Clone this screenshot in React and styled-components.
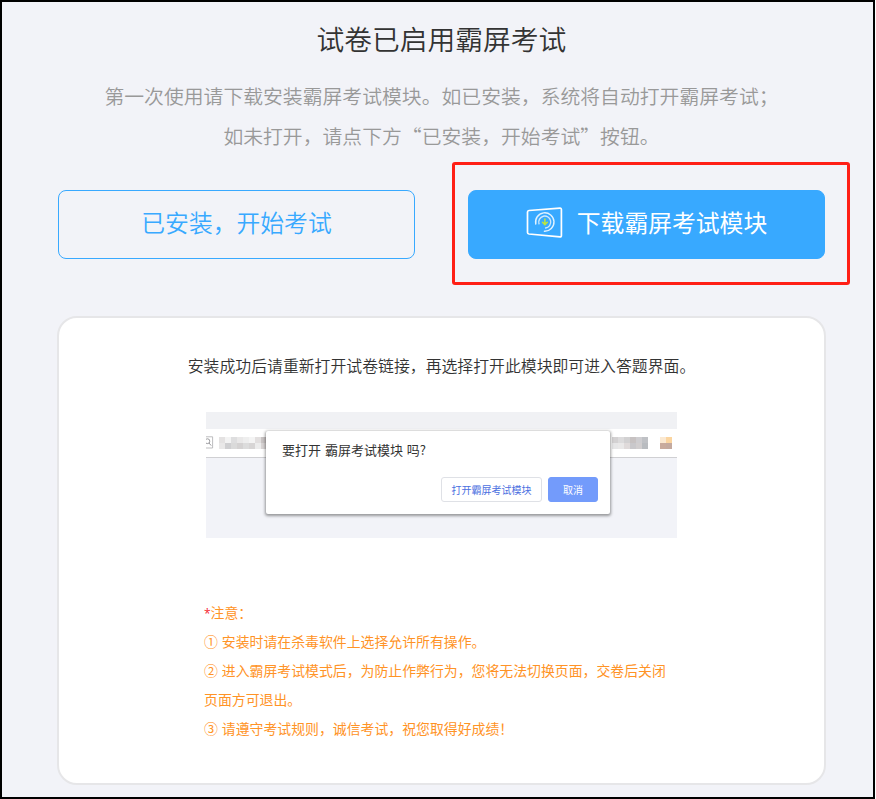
import styled, { createGlobalStyle } from "styled-components";

const EstiloGlobal = createGlobalStyle`
    * {
        box-sizing: border-box;
    }
    html {
        background-color: #fff;
    }
    body {
        margin: 0;
        font-family: "Noto Sans CJK SC", sans-serif;
        overflow: hidden;
    }
    h1, p {
        margin: 0;
        font-weight: inherit;
    }
`

const Pagina = styled.main`
    width: 875px;
    height: 799px;
    padding: 15px 48px 0 56px;
    border: 2px solid #000;
    background-color: #f2f3f8;
    display: flex;
    flex-direction: column;
`

const Titulo = styled.h1`
    text-align: center;
    font-size: 27.76px;
    font-weight: 350;
    line-height: 42px;
    color: #333;
    white-space: nowrap;
`

const Descricao = styled.div`
    margin-top: 17px;
    text-align: center;
    font-size: 19.83px;
    font-weight: 350;
    line-height: 39.5px;
    color: #999;
    white-space: nowrap;
`

const Acoes = styled.div`
    margin-top: 35px;
    display: flex;
    justify-content: space-between;
    width: 767px;
`

const Botao = styled.button`
    position: relative;
    width: 357px;
    height: 69px;
    padding: 0 0 5px;
    border: 1px solid #38a9ff;
    border-radius: 8px;
    background-color: ${({ $primario }) => ($primario ? "#38a9ff" : "transparent")};
    color: ${({ $primario }) => ($primario ? "#fff" : "#38a9ff")};
    font-family: inherit;
    font-size: 23.8px;
    font-weight: ${({ $primario }) => ($primario ? 400 : 350)};
    line-height: 36px;
    display: flex;
    align-items: center;
    justify-content: center;
    gap: 14px;
    white-space: nowrap;

    svg {
        margin-top: 2px;
    }
`

const Destaque = styled.span`
    position: absolute;
    top: -29px;
    left: -17px;
    width: 398px;
    height: 123px;
    border: 3px solid #ff1f16;
    border-radius: 3px;
    pointer-events: none;
`

const Cartao = styled.section`
    margin: 57px 0 0 -1px;
    width: 769px;
    height: 469px;
    border: 2px solid #e6e6e8;
    border-radius: 20px;
    background-color: #fff;
    padding-top: 36px;
    display: flex;
    flex-direction: column;
    align-items: center;
`

const Instrucao = styled.p`
    font-size: 15.87px;
    font-weight: 350;
    line-height: 24px;
    color: #333;
    white-space: nowrap;
`

const Previa = styled.div`
    position: relative;
    margin-top: 34px;
    width: 471px;
    height: 126px;
    background-color: #f2f3f8;
    display: flex;
    flex-direction: column;
`

const BarraAbas = styled.div`
    height: 17px;
    background-color: #f0f1f4;
`

const BarraEndereco = styled.div`
    height: 29px;
    background-color: #fff;
    border-bottom: 1px solid #d0d0d3;
    display: flex;
    align-items: center;
    padding-bottom: 1px;
`

const Mosaico = styled.div`
    display: grid;
    grid-template-columns: repeat(${({ $colunas }) => $colunas}, 6px);
    grid-auto-rows: 6px;
    margin-left: ${({ $recuo }) => $recuo}px;
    filter: blur(0.5px);
`

const Bloco = styled.i`
    background-color: ${({ $cor }) => $cor};
`

const Dialogo = styled.div`
    position: absolute;
    top: 19px;
    left: 60px;
    width: 344px;
    height: 83px;
    padding: 9px 12px 12px 16px;
    background-color: #fff;
    border-radius: 2px;
    box-shadow: 0 1px 3px 1px rgba(0, 0, 0, 0.38);
    display: flex;
    flex-direction: column;
    justify-content: space-between;
`

const DialogoTitulo = styled.p`
    font-size: 13px;
    line-height: 20px;
    color: #333;
    word-spacing: 1px;
    white-space: nowrap;
`

const DialogoAcoes = styled.div`
    display: flex;
    justify-content: flex-end;
    gap: 6px;
`

const DialogoBotao = styled.span`
    width: ${({ $largura }) => $largura}px;
    height: 25px;
    border: 1px solid ${({ $primario }) => ($primario ? "#739bfb" : "#dfe1e6")};
    border-radius: 3px;
    background-color: ${({ $primario }) => ($primario ? "#739bfb" : "#fff")};
    color: ${({ $primario }) => ($primario ? "#fff" : "#4b70df")};
    font-size: 10px;
    line-height: 23px;
    text-align: center;
    white-space: nowrap;
`

const Avisos = styled.div`
    margin-top: 60px;
    width: 475px;
    font-size: 13.88px;
    line-height: 29px;
    color: #ff9326;
    word-spacing: 0.8px;
    white-space: nowrap;
`

const Asterisco = styled.span`
    font-family: "Open Sans", sans-serif;
    font-size: 12px;
    line-height: 1;
    color: #f5222d;
`

const CORES_ESQUERDA = [
    "#e4e2e2", "#f3f3f3", "#dededf", "#e9e8e8", "#eeeeee", "#f4f4f4", "#e2dfdf", "#c9c4c4",
    "#e9e8e8", "#cfcfd1", "#dadada", "#d4d2d2", "#dcdcdc", "#d7d5d5", "#ececec", "#d8d4d4",
]

const CORES_DIREITA = [
    "#d3d1d2", "#dcdbdc", "#d2d1d2", "#c7c2c2", "#cecdd0", "#bfc1c5",
    "#e6e6e7", "#e9e8e8", "#dfdada", "#c9c8cb", "#d1cecf", "#b9bcc0",
]

const CORES_AVATAR = ["#fbe9d2", "#fbd5a0", "#c9ab9d", "#c4aa9f"]

function IconeModulo() {
    return (
        <svg width="37" height="32" viewBox="0 0 37 32" fill="none" strokeLinecap="round" strokeLinejoin="round">
            <path d="M3 3.5L34 1.2Q35.4 1.1 35.4 2.6V28.4Q35.4 30 34 29.8L3 27Q1.5 26.8 1.5 25.5V5Q1.5 3.6 3 3.5Z" stroke="#fff" strokeWidth="1.7" />
            <path d="M9.8 17A9.2 9.2 0 1 1 18.4 24.2" stroke="#fff" strokeOpacity="0.85" strokeWidth="1.4" />
            <path d="M13 16.8A6 6 0 1 1 19.6 21" stroke="#fff" strokeOpacity="0.75" strokeWidth="1.4" />
            <path d="M18.9 12V17.4M16.5 15.2L18.9 17.6L21.3 15.2" stroke="#bfe63c" strokeWidth="1.5" />
        </svg>
    )
}

function IconePesquisa() {
    return (
        <svg width="8" height="13" viewBox="0 0 8 13" fill="none" stroke="#909094" strokeWidth="0.9">
            <path d="M0 0.8H6.6V12H0" stroke="#b5b5b8" />
            <circle cx="1.4" cy="5.2" r="2.4" />
            <path d="M3 7L5.2 9.6" />
        </svg>
    )
}

function Pixelado({ cores, colunas, recuo }) {
    return (
        <Mosaico $colunas={colunas} $recuo={recuo}>
            {cores.map((cor, i) => <Bloco key={i} $cor={cor} />)}
        </Mosaico>
    )
}

function PreviaNavegador() {
    return (
        <Previa>
            <BarraAbas />
            <BarraEndereco>
                <IconePesquisa />
                <Pixelado cores={CORES_ESQUERDA} colunas={8} recuo={5} />
                <Pixelado cores={CORES_DIREITA} colunas={6} recuo={345} />
                <Pixelado cores={CORES_AVATAR} colunas={2} recuo={12} />
            </BarraEndereco>
            <Dialogo>
                <DialogoTitulo>要打开 霸屏考试模块 吗?</DialogoTitulo>
                <DialogoAcoes>
                    <DialogoBotao $largura={101}>打开霸屏考试模块</DialogoBotao>
                    <DialogoBotao $largura={50} $primario>取消</DialogoBotao>
                </DialogoAcoes>
            </Dialogo>
        </Previa>
    )
}

export default function App() {
    return (
        <>
            <EstiloGlobal />
            <Pagina lang="zh-CN">
                <Titulo>试卷已启用霸屏考试</Titulo>
                <Descricao>
                    <p>第一次使用请下载安装霸屏考试模块。如已安装，系统将自动打开霸屏考试；</p>
                    <p>如未打开，请点下方“已安装，开始考试”按钮。</p>
                </Descricao>
                <Acoes>
                    <Botao>已安装，开始考试</Botao>
                    <Botao $primario>
                        <IconeModulo />
                        下载霸屏考试模块
                        <Destaque />
                    </Botao>
                </Acoes>
                <Cartao>
                    <Instrucao>安装成功后请重新打开试卷链接，再选择打开此模块即可进入答题界面。</Instrucao>
                    <PreviaNavegador />
                    <Avisos>
                        <p><Asterisco>*</Asterisco>注意：</p>
                        <p>① 安装时请在杀毒软件上选择允许所有操作。</p>
                        <p>② 进入霸屏考试模式后，为防止作弊行为，您将无法切换页面，交卷后关闭</p>
                        <p>页面方可退出。</p>
                        <p>③ 请遵守考试规则，诚信考试，祝您取得好成绩！</p>
                    </Avisos>
                </Cartao>
            </Pagina>
        </>
    )
}
